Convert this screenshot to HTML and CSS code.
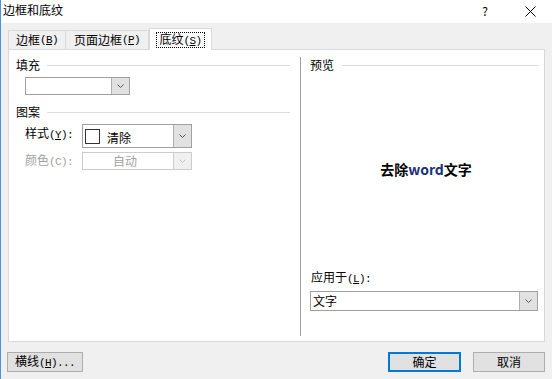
FILE: index.html
```html
<!DOCTYPE html>
<html lang="zh">
<head>
<meta charset="utf-8">
<link rel="stylesheet" href="styles.css">
</head>
<body>
<div class="window">
  <div class="titlebar">
    <span class="title">边框和底纹</span>
    <span class="help">?</span>
    <svg class="close" width="11" height="11" viewBox="0 0 11 11"><path d="M0.5 0.5L10.5 10.5M10.5 0.5L0.5 10.5" stroke="#000" stroke-width="1" fill="none"/></svg>
  </div>

  <div class="tabs">
    <div class="tab t1">边框<span class="a">(<u>B</u>)</span></div>
    <div class="tab t2">页面边框<span class="a">(<u>P</u>)</span></div>
    <div class="tab t3 active"><span class="focus">底纹<span class="a">(<u>S</u>)</span></span></div>
  </div>

  <div class="panel">
    <div class="col-left">
      <div class="group-title"><span>填充</span><i></i></div>
      <div class="combo fill-combo">
        <div class="combo-value"></div>
        <div class="combo-btn"><svg width="7" height="4" viewBox="0 0 7 4"><path d="M0.5 0.5L3.5 3.5L6.5 0.5" stroke="#555" fill="none"/></svg></div>
      </div>

      <div class="group-title pattern-title"><span>图案</span><i></i></div>
      <div class="row style-row">
        <span class="row-label">样式<span class="a">(<u>Y</u>):</span></span>
        <div class="combo style-combo">
          <div class="combo-value"><span class="swatch"></span><span class="style-text">清除</span></div>
          <div class="combo-btn"><svg width="7" height="4" viewBox="0 0 7 4"><path d="M0.5 0.5L3.5 3.5L6.5 0.5" stroke="#555" fill="none"/></svg></div>
        </div>
      </div>
      <div class="row color-row">
        <span class="row-label disabled">颜色<span class="a">(C):</span></span>
        <div class="combo color-combo disabled-combo">
          <div class="combo-value center">自动</div>
          <div class="combo-btn"><svg width="7" height="4" viewBox="0 0 7 4"><path d="M0.5 0.5L3.5 3.5L6.5 0.5" stroke="#c4c4c4" fill="none"/></svg></div>
        </div>
      </div>
    </div>

    <div class="col-right">
      <div class="group-title"><span>预览</span><i></i></div>
      <div class="preview"><span class="preview-text">去除<span class="word">word</span>文字</span></div>
      <div class="apply-label">应用于<span class="a">(<u>L</u>):</span></div>
      <div class="combo apply-combo">
        <div class="combo-value">文字</div>
        <div class="combo-btn"><svg width="7" height="4" viewBox="0 0 7 4"><path d="M0.5 0.5L3.5 3.5L6.5 0.5" stroke="#555" fill="none"/></svg></div>
      </div>
    </div>
  </div>

  <div class="footer">
    <button class="btn hline">横线<span class="a">(<u>H</u>)...</span></button>
    <button class="btn ok">确定</button>
    <button class="btn cancel">取消</button>
  </div>
</div>
</body>
</html>
```

FILE: styles.css
```css
html, body {
  margin: 0;
  padding: 0;
}

body {
  width: 552px;
  height: 379px;
  overflow: hidden;
  font-family: "Noto Sans CJK SC", "Noto Sans", sans-serif;
  font-size: 12px;
  color: #000;
}

.window {
  width: 552px;
  height: 379px;
  box-sizing: border-box;
  background: #f0f0f0;
  border-left: 1px solid #4a93de;
  display: flex;
  flex-direction: column;
}

u {
  text-decoration: underline;
  text-underline-offset: 1px;
}

/* half-width ASCII part, like the bitmap dialog font */
.a {
  font-family: "Liberation Mono", "DejaVu Sans Mono", monospace;
  font-size: 11px;
  letter-spacing: -0.6px;
}

/* title bar */
.titlebar {
  height: 23px;
  flex: none;
  background: #fff;
  display: flex;
  align-items: flex-start;
  padding-top: 2px;
  box-sizing: border-box;
}

.title {
  line-height: 16px;
  margin-left: 2px;
}

.help {
  margin-left: auto;
  width: 10px;
  text-align: center;
  line-height: 16px;
  margin-top: 1px;
}

.close {
  margin-left: 35px;
  margin-right: 16px;
  margin-top: 4px;
}

/* tabs */
.tabs {
  display: flex;
  align-items: flex-end;
  margin-top: 5px;
  padding-left: 7px;
  height: 21px;
  position: relative;
  z-index: 1;
  flex: none;
}

.tab {
  height: 19px;
  box-sizing: border-box;
  border: 1px solid #d9d9d9;
  border-bottom: none;
  background: #f0f0f0;
  display: flex;
  align-items: center;
  justify-content: center;
  line-height: 14px;
  white-space: nowrap;
}

.t1 { width: 58px; }
.t2 { width: 83px; border-left: none; }

.tab.active {
  width: 63px;
  height: 22px;
  margin-bottom: -1px;
  background: #fff;
  border-color: #d9d9d9;
}

.focus {
  border: 1px dotted #000;
  padding: 0 2px;
  line-height: 12px;
  margin-top: 1px;
}

/* panel */
.panel {
  height: 293px;
  box-sizing: border-box;
  margin: 0 7px 0 7px;
  background: #fff;
  border: 1px solid #d9d9d9;
  display: flex;
  padding: 7px 0 5px 0;
  flex: none;
}

.col-left {
  width: 291px;
  box-sizing: border-box;
  padding: 0 10px 0 7px;
}

.col-right {
  flex: 1;
  border-left: 1px solid #a0a0a0;
  padding: 0 5px 0 9px;
  display: flex;
  flex-direction: column;
}

.group-title {
  display: flex;
  align-items: center;
  height: 16px;
  line-height: 16px;
}

.group-title i {
  flex: 1;
  height: 1px;
  background: #dcdcdc;
  margin-left: 7px;
}

.col-right .group-title i {
  margin-left: 8px;
}

/* combo boxes */
.combo {
  display: flex;
  box-sizing: border-box;
  border: 1px solid #a0a0a0;
  background: #fff;
}

.combo-value {
  flex: 1;
  display: flex;
  align-items: center;
  padding-left: 2px;
  line-height: 14px;
}

.combo-value.center {
  justify-content: center;
  padding-left: 0;
  padding-right: 6px;
}

.combo-btn {
  width: 17px;
  background: #e1e1e1;
  border-left: 1px solid #adadad;
  display: flex;
  align-items: center;
  justify-content: center;
}

.fill-combo {
  width: 105px;
  height: 18px;
  margin-top: 4px;
  margin-left: 9px;
}

.pattern-title {
  margin-top: 9px;
}

.row {
  display: flex;
  align-items: center;
  margin-top: 4px;
  margin-left: 9px;
}

.row-label {
  width: 57px;
  line-height: 14px;
  white-space: nowrap;
}

.row-label.disabled {
  color: #a0a0a0;
}

.style-row .row-label {
  margin-top: -4px;
}

.style-combo {
  width: 110px;
  height: 24px;
}

.style-combo .combo-value {
  padding-left: 2px;
}

.swatch {
  width: 15px;
  height: 15px;
  box-sizing: border-box;
  border: 1px solid #333;
  margin-right: 7px;
}

.style-text {
  margin-top: 4px;
}

.color-combo {
  width: 110px;
  height: 18px;
}

.disabled-combo {
  border-color: #cccccc;
  color: #a0a0a0;
}

.disabled-combo .combo-btn {
  background: #f0f0f0;
  border-left-color: #cccccc;
}

/* preview */
.preview {
  height: 192px;
  display: flex;
  align-items: center;
  justify-content: center;
}

.preview-text {
  font-size: 14px;
  font-weight: bold;
  line-height: 16px;
  margin-left: 3px;
}

.word {
  color: #1c2f7a;
}

.apply-label {
  margin-top: 4px;
  line-height: 16px;
  margin-left: 1px;
}

.apply-combo {
  margin-top: 4px;
  height: 20px;
  width: 228px;
}

/* footer */
.footer {
  display: flex;
  padding: 10px 7px 0 6px;
}

.btn {
  height: 20px;
  box-sizing: border-box;
  background: #e1e1e1;
  border: 1px solid #adadad;
  font-family: inherit;
  font-size: 12px;
  line-height: 14px;
  padding: 0;
  color: #000;
  white-space: nowrap;
}

.hline {
  width: 76px;
}

.ok {
  width: 73px;
  margin-left: auto;
  border: 2px solid #0078d7;
}

.cancel {
  width: 72px;
  margin-left: 12px;
}
```
